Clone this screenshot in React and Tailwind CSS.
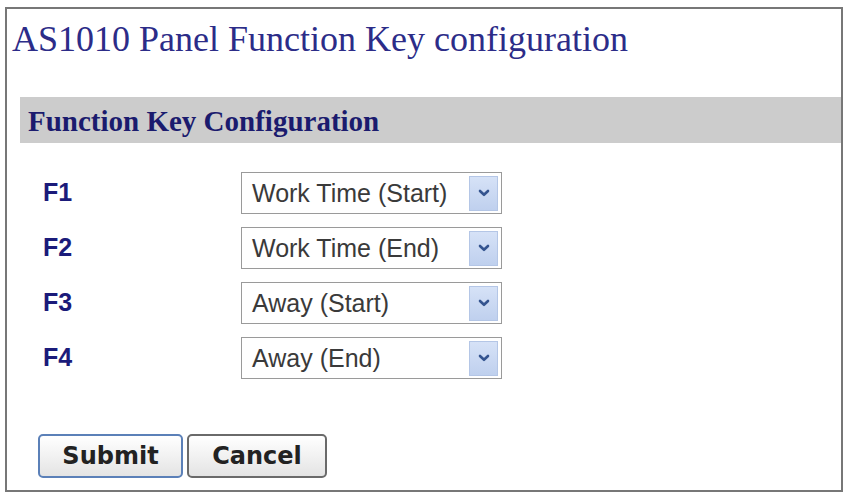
import { useState } from "react";

const keys = [
  { id: "F1", value: "Work Time (Start)" },
  { id: "F2", value: "Work Time (End)" },
  { id: "F3", value: "Away (Start)" },
  { id: "F4", value: "Away (End)" },
];

const Chevron = () => (
  <svg width="12" height="8" viewBox="0 0 12 8" fill="none">
    <path d="M2 2 L6 5.8 L10 2" stroke="#34548f" strokeWidth="2.6" strokeLinecap="round" strokeLinejoin="round" />
  </svg>
);

const KeySelect = ({ value }) => (
  <div className="flex items-center w-[261px] h-[42px] border border-[#9a9a9a] bg-white pl-[10px] pr-[3px]">
    <span className="flex-1 text-[25px] text-[#3a3a3a] font-['Liberation_Sans',Arial,sans-serif] leading-none">
      {value}
    </span>
    <div className="flex items-center justify-center w-[29px] h-[35px] bg-gradient-to-b from-[#d6e2f7] to-[#bfd0ee] border border-[#b4c6e6]">
      <Chevron />
    </div>
  </div>
);

export default function App() {
  const [values] = useState(keys);

  return (
    <div className="w-[845px] h-[495px] bg-white pt-[7px] pl-[5px]">
      <div className="w-[838px] h-[485px] border-2 border-[#777] bg-white flex flex-col">
        <h1 className="pl-[5px] pt-[10px] text-[36px] leading-[40px] text-[#2c2c88] font-['Liberation_Serif','Times_New_Roman',serif]">
          AS1010 Panel Function Key configuration
        </h1>

        <div className="ml-[13px] mt-[38px] h-[46px] bg-[#cccccc] flex items-center pl-[8px] pt-[3px]">
          <h2 className="text-[29px] font-bold text-[#1b1b6e] font-['Liberation_Serif','Times_New_Roman',serif]">
            Function Key Configuration
          </h2>
        </div>

        <div className="mt-[29px] flex flex-col gap-[13px]">
          {values.map((k) => (
            <div key={k.id} className="flex items-center">
              <span className="w-[234px] pl-[36px] text-[25px] font-bold text-[#1b1b7a] font-['Liberation_Sans',Arial,sans-serif]">
                {k.id}
              </span>
              <KeySelect value={k.value} />
            </div>
          ))}
        </div>

        <div className="mt-[55px] pl-[31px] flex gap-[4px]">
          <button className="w-[145px] h-[44px] rounded-[5px] border-2 border-[#5b80b8] bg-gradient-to-b from-white to-[#e4e4e4] text-[24px] font-bold text-[#222] font-['DejaVu_Sans',Verdana,sans-serif]">
            Submit
          </button>
          <button className="w-[140px] h-[44px] rounded-[5px] border-2 border-[#6a6a6a] bg-gradient-to-b from-white to-[#e4e4e4] text-[24px] font-bold text-[#222] font-['DejaVu_Sans',Verdana,sans-serif]">
            Cancel
          </button>
        </div>
      </div>
    </div>
  );
}
